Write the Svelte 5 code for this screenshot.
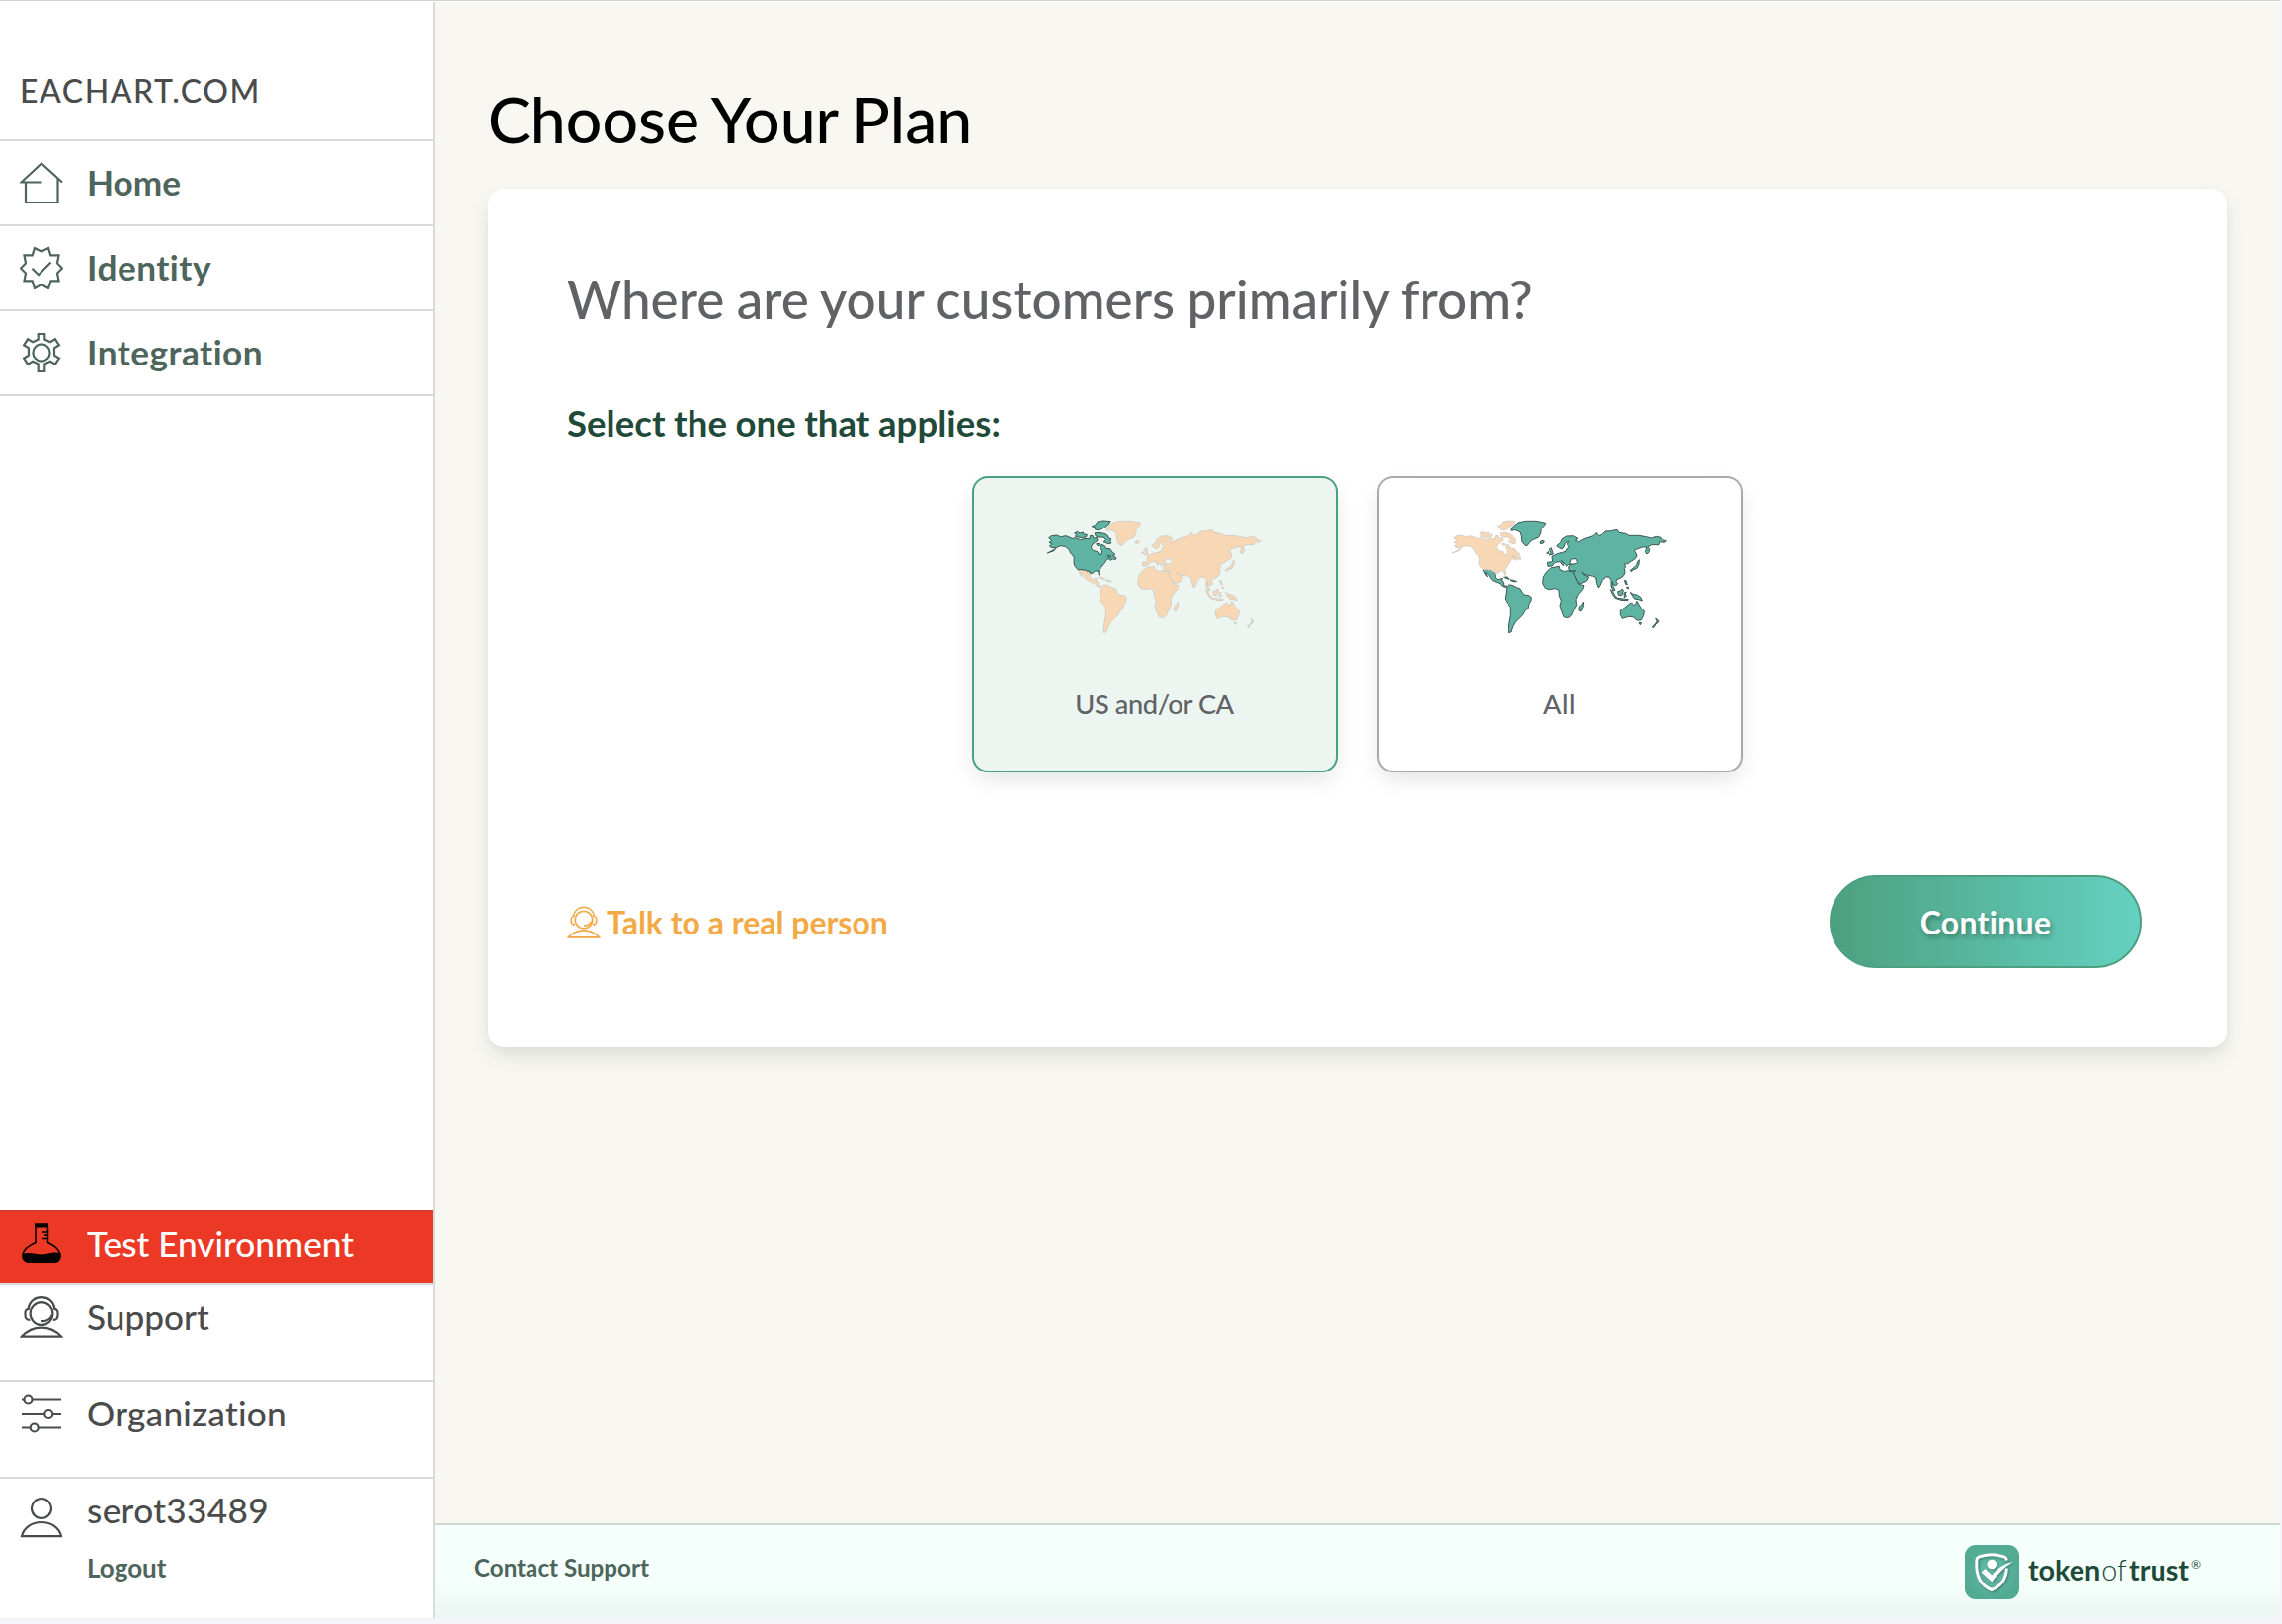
<script>
  const nav = [
    { label: 'Home', icon: 'home' },
    { label: 'Identity', icon: 'badge' },
    { label: 'Integration', icon: 'gear' }
  ];

  const regions = [
    { label: 'US and/or CA', us: true, selected: true },
    { label: 'All', us: false, selected: false }
  ];

  // Canada, the United States and the Arctic islands
  const northAmerica = [
    'M64 150L84 140L90 134L78 134L70 129L78 122L69 118L78 113L68 104L76 98L92 96L104 101L120 98L140 106L150 104L164 110L180 106L192 107L193 98L201 97L204 106L214 103L216 112L208 118L200 124L196 134L202 142L216 146L222 156L228 154L230 143L224 134L228 124L238 128L242 136L254 137L262 148L270 154L262 158L272 163L272 169L262 168L256 172L250 167L244 170L236 182L226 194L222 203L224 216L220 216L218 204L208 204L204 209L194 212L190 204L184 206L180 200L174 202L168 200L156 200L146 188L144 178L145 164L140 156L134 150L130 140L118 130L104 128L92 133L84 143Z',
    'M198 68L210 64L216 54L234 51L255 53L250 62L238 72L220 80L208 78L210 72Z',
    'M146 90L154 85L162 90L172 87L174 93L184 94L182 101L170 104L158 102L148 99L154 94Z',
    'M208 89L222 88L240 92L248 98L250 104L258 108L254 114L258 120L248 122L240 118L234 116L242 110L234 102L218 102L210 98Z',
    'M212 122L220 121L224 125L216 128Z',
    'M246 158L254 157L258 162L250 164Z'
  ];

  const restOfWorld = [
    // Greenland and Iceland
    'M242 81L250 68L264 57L286 52L318 52L347 58L344 65L334 76L332 90L326 102L308 110L298 118L292 127L285 127L276 116L274 98L270 86L256 80Z',
    'M330 117L336 112L343 114L340 120L332 122Z',
    // Mexico, Central America and the Caribbean
    'M156 200L168 200L174 202L180 200L186 206L192 212L193 222L198 230L208 228L214 226L212 234L218 238L218 248L228 250L224 254L214 250L208 242L196 238L184 232L178 224L172 214L164 208L170 222L164 216Z',
    'M218 223L228 222L238 228L232 229Z',
    'M240 231L250 232L260 236L248 236Z',
    // South America
    'M228 252L236 246L246 247L260 254L270 258L276 268L282 276L296 278L304 284L303 294L297 304L294 318L284 326L278 338L268 348L256 360L248 374L243 390L234 391L236 366L241 338L241 314L230 302L223 288L226 270Z',
    // Africa and Madagascar
    'M364 194L388 190L390 200L404 206L412 203L430 207L437 224L446 244L462 248L458 260L444 276L438 290L440 308L432 322L424 340L414 347L402 344L396 328L390 310L394 294L388 280L387 262L376 257L358 260L346 256L338 242L340 222L350 206Z',
    'M448 312L456 306L460 298L461 308L454 326L447 324Z',
    // Europe and Asia
    'M380 128L392 118L396 108L410 99L430 98L444 106L436 112L446 116L460 108L470 104L480 102L492 98L502 88L508 98L518 94L528 84L545 83L564 79L570 88L590 91L600 97L630 97L652 101L668 105L682 100L696 103L700 110L712 113L706 118L692 116L690 125L668 125L656 132L662 138L660 148L654 153L649 146L654 132L640 132L624 138L616 142L624 156L620 166L608 174L596 182L586 183L590 192L586 196L588 208L584 218L574 226L564 229L561 236L566 242L560 249L552 244L549 236L552 250L558 262L552 264L546 250L546 232L540 222L530 222L520 232L513 248L508 255L503 242L500 224L490 219L474 217L460 213L456 206L462 216L476 222L470 234L450 243L442 234L434 218L430 206L438 203L418 204L416 192L422 184L438 182L443 178L438 167L424 168L420 178L424 184L414 184L410 190L406 182L394 172L402 182L400 188L390 176L376 178L366 189L354 190L352 178L368 176L366 160L382 152L398 148L408 145L410 138L418 132L412 124L416 114L406 120L402 132L396 138L388 134Z',
    'M358 156L362 148L358 138L364 134L368 146L370 153Z',
    'M350 150L356 145L356 152Z',
    // Japan and the western Pacific
    'M604 202L614 194L622 188L626 176L631 170L630 184L624 196L612 201L606 206Z',
    'M586 232L592 234L592 242L596 244L590 244Z',
    'M592 254L598 252L598 258Z',
    'M544 260L552 268L558 280L566 286L582 288L598 290L596 293L576 292L558 286L550 274Z',
    'M566 266L574 264L580 258L583 264L578 278L568 277Z',
    'M585 270L592 268L588 273L592 280L586 284Z',
    'M604 268L612 274L626 277L636 284L640 294L628 290L616 288L610 278Z',
    // Australia and New Zealand
    'M574 324L586 316L598 306L608 300L614 308L620 304L624 295L630 306L636 316L646 326L644 340L636 354L624 354L612 344L598 343L580 349L574 338Z',
    'M630 361L638 362L634 368Z',
    'M680 348L690 356L686 363L680 366L684 356Z',
    'M670 375L680 364L678 372L673 377Z'
  ];
</script>

{#snippet agent()}
  <g transform="translate(0 1.6)">
    <circle cx="22" cy="18" r="11.4" />
    <path d="M8.600 13C9.600 6 15 1.600 22 1.600S34.400 6 35.400 13" />
    <path d="M9.800 13c-4 .6-4.600 2-4.300 6 .1 3.600 1.200 5.400 4.700 5.200M34.200 13c4 .6 4.600 2 4.300 6-.1 3.600-1.200 5.400-4.700 5.200" />
    <path d="M22 25.400c5 .4 9-2 11-6.400" />
    <path d="M2 41C7 35.500 14 32 22 32s15 3.500 20 9z" />
  </g>
{/snippet}

{#snippet icon(name)}
  <svg class="icon" viewBox="0 0 44 44">
    {#if name === 'home'}
      <path d="M22.500 21.500H1.500L22 2.500 43 21.500M6 21.500V42H38.500V17.500" />
    {:else if name === 'badge'}
      <path d="M22 5.600L29 2 31.300 9.300 39.500 9.300 38 17.500 43 22.500 38 27.500 39.500 35.400 31.500 35.400 29 43 22 39 15 43 12.600 35.400 4.500 35.400 6 27.500 1 22.500 6 17.500 4.500 9.300 12.700 9.300 15 2Z" />
      <path d="M12.500 22.800l6.500 6.500L31.500 16.500" />
    {:else if name === 'gear'}
      <path d="M18.700 3h6.600v5.500l5.600 2.800 5-3 4 6-4.900 3v7.400l4.900 3-4 6-5-3-5.600 2.800V41h-6.600v-7.500l-5.600-2.800-5 3-4-6 4.900-3v-7.400l-4.900-3 4-6 5 3 5.600-2.800z" />
      <circle cx="22" cy="22" r="8.600" />
    {:else if name === 'flask'}
      <path class="solid" d="M15 2.300h14v4.200h-14zM2.500 33c10-3 16 2 24 0s10-2 15-.5C42.500 39 40 43 35 43H10C4 43 1.500 39 2.500 33Z" />
      <path d="M16 6V21.500C10 24 4 28 2.800 34M28.500 6V21.500C34 24 40 28 41 34M23 11h5M25 14h3M23 17.500h5" stroke-width="1.500" />
    {:else if name === 'agent'}
      {@render agent()}
    {:else if name === 'sliders'}
      <path d="M2 8.500H4.500M13 8.500H42M2 23H25M34 23H42M2 37.500H10.500M19 37.500H42" />
      <circle cx="8.500" cy="8.500" r="4" /><circle cx="29.300" cy="23" r="4" /><circle cx="14.700" cy="37.500" r="4" />
    {:else if name === 'user'}
      <circle cx="22" cy="13" r="10" />
      <path d="M2 41.200C4 32.500 12 27 22 27S40 32.500 42 41.200Z" />
    {/if}
  </svg>
{/snippet}

<div class="page">
  <aside>
    <div class="site">EACHART.COM</div>
    <nav>
      {#each nav as item}
        <a class="nav-row" href="#top">{@render icon(item.icon)}<span class={item.icon}>{item.label}</span></a>
      {/each}
    </nav>
    <div class="lower">
      <div class="low-row test">{@render icon('flask')}<span>Test Environment</span></div>
      <div class="low-row">{@render icon('agent')}<span>Support</span></div>
      <div class="low-row">{@render icon('sliders')}<span class="org">Organization</span></div>
      <div class="low-row account">
        {@render icon('user')}
        <div class="who"><span class="name">serot33489</span><a class="logout" href="#top">Logout</a></div>
      </div>
    </div>
  </aside>

  <div class="content">
    <main>
      <h1>Choose Your Plan</h1>
      <section class="panel">
        <h2>Where are your customers primarily from?</h2>
        <h3>Select the one that applies:</h3>
        <div class="options">
          {#each regions as r}
            <div class="option" class:selected={r.selected}>
              <svg class="map" viewBox="0 0 780 450">
                <g class={r.us ? 'off' : 'on'}>{#each restOfWorld as d}<path {d} />{/each}</g>
                <g class={r.us ? 'on' : 'off'}>{#each northAmerica as d}<path {d} />{/each}</g>
              </svg>
              <span class:tight={r.us}>{r.label}</span>
            </div>
          {/each}
        </div>
        <div class="actions">
          <a class="talk" href="#top">
            <svg viewBox="0 0 44 44">{@render agent()}</svg>
            <span>Talk to a real person</span>
          </a>
          <button>Continue</button>
        </div>
      </section>
    </main>
    <footer>
      <a class="contact" href="#top">Contact Support</a>
      <div class="brand">
        <svg viewBox="0 0 55 55">
          <defs>
            <radialGradient id="tile"><stop offset="0" stop-color="#66bcad" /><stop offset="1" stop-color="#52aa92" /></radialGradient>
          </defs>
          <rect width="55" height="55" rx="11" fill="url(#tile)" />
          <g class="drop">
            <path class="shield" d="M42.300 15.500C42 12.500 41 12 38 11.500C31 9.300 23 9.300 16 11.500C12.500 12.500 12 13 11.800 17C11 31 15 40.500 27 45.500C38 41 42 33 42.300 23.500" />
            <circle cx="27.300" cy="19.500" r="4.800" />
            <path class="tick" d="M16.500 27.500L20.500 24 27.500 30.500C33 23.500 40 18.500 49 17 41 21.500 34 28.500 27.300 37.500Z" />
          </g>
        </svg>
        <div class="word"><b>token</b><i>of</i><b>trust</b><sup>®</sup></div>
      </div>
    </footer>
  </div>
</div>

<style>
  :global(body) { background: #f4f4fa; }
  .page {
    display: flex;
    width: 2308px;
    height: 1638px;
    box-sizing: border-box;
    border-top: 1px solid #d3d2d3;
    background: #fff;
    color: #4a4c4c;
    font-family: Lato, sans-serif;
    font-variant-ligatures: none;
    white-space: nowrap;
  }
  a { color: inherit; text-decoration: none; }
  svg { display: block; flex: none; }

  aside {
    display: flex;
    flex-direction: column;
    flex: none;
    width: 438px;
    margin-top: 1px;
    border-right: 2px solid #d9dada;
  }
  .site {
    height: 139px;
    padding: 70px 0 0 20px;
    box-sizing: border-box;
    font-size: 32px;
    font-weight: 500;
    line-height: 40px;
    letter-spacing: 1.550px;
  }
  nav { border-bottom: 2px solid #d9dada; }
  .nav-row {
    display: flex;
    align-items: center;
    gap: 24px;
    height: 84px;
    padding-left: 20px;
    border-top: 2px solid #d9dada;
    color: #4e655c;
    font-size: 35.200px;
    font-weight: 700;
  }
  .nav-row span { padding-bottom: 3px; }
  .badge, .gear { letter-spacing: 0.500px; }
  .icon {
    width: 44px;
    height: 44px;
    fill: none;
    stroke: currentColor;
    stroke-width: 2.200;
  }
  .lower { margin-top: auto; }
  .low-row {
    display: flex;
    align-items: flex-start;
    gap: 24px;
    height: 87px;
    padding: 9px 0 0 20px;
    border-top: 2px solid #d9dada;
    font-size: 35.200px;
    font-weight: 500;
    line-height: 45px;
  }
  .test { height: 63px; background: #ec3926; border-color: #d93c2a; color: #fff; }
  .test .icon { color: #000; }
  .solid { fill: #000; stroke: none; }
  .org { letter-spacing: 0.250px; }
  .account { height: 132px; }
  .account .icon { margin-top: 8px; }
  .who { display: flex; flex-direction: column; gap: 16px; }
  .name { letter-spacing: 0.350px; }
  .logout { color: #4e655c; font-size: 26px; font-weight: 700; line-height: 40px; }

  .content { display: flex; flex-direction: column; flex: 1; margin-top: 1px; background: #f8f7f2; }
  main { flex: 1; padding: 84px 54px 0 54px; }
  h1, h2, h3 { margin: 0; }
  h1 { color: #000; font-size: 64.300px; font-weight: 500; line-height: 70px; word-spacing: -2px; }
  .panel {
    height: 869px;
    margin-top: 35px;
    padding: 79px 86px 0 80px;
    box-sizing: border-box;
    border-radius: 16px;
    background: #fff;
    box-shadow: 0 10px 24px -4px rgba(60, 80, 60, 0.160), 0 4px 12px -4px rgba(60, 80, 60, 0.080);
  }
  h2 { color: #616266; font-size: 53.100px; font-weight: 500; line-height: 66px; word-spacing: -1px; }
  h3 { margin-top: 67px; color: #1f4a3a; font-size: 36.500px; font-weight: 700; line-height: 50px; word-spacing: -0.500px; letter-spacing: 0.080px; }
  .options { display: flex; justify-content: center; gap: 40px; margin: 29px 0 0 5px; }
  .option {
    display: flex;
    flex-direction: column;
    align-items: center;
    width: 370px;
    height: 300px;
    padding-top: 26px;
    box-sizing: border-box;
    border: 2px solid #a9a9a9;
    border-radius: 16px;
    background: #fff;
    box-shadow: 0 10px 24px -4px rgba(0, 0, 0, 0.120);
    color: #616266;
    font-size: 27.200px;
    font-weight: 500;
  }
  .option span { margin-top: 33px; line-height: 40px; letter-spacing: 0.500px; }
  .option .tight { letter-spacing: -0.400px; }
  .selected { border-color: #4ba080; background: #ecf5f0; }
  .map { width: 260px; height: 150px; margin-left: 1px; stroke-linejoin: round; }
  .on { fill: #5fb3a3; stroke: #3b5853; stroke-width: 3; }
  .off { fill: #f8d7b5; stroke: #cdcbc7; stroke-width: 2.500; }

  .actions { display: flex; justify-content: space-between; align-items: center; margin-top: 104px; }
  .talk { display: flex; align-items: center; gap: 6px; color: #f3a945; font-size: 32px; font-weight: 700; }
  .talk svg { width: 34px; height: 34px; fill: none; stroke: currentColor; stroke-width: 2.200; }
  button {
    width: 316px;
    height: 94px;
    padding: 0;
    border: 2px solid #4ca07f;
    border-radius: 47px;
    background: linear-gradient(90deg, #4ca07f, #65d1c1);
    color: #fff;
    font: 700 32px Lato, sans-serif;
    font-variant-ligatures: none;
    letter-spacing: 0.300px;
    text-shadow: 2px 3px 5px rgba(0, 0, 0, 0.300);
  }

  footer {
    display: flex;
    align-items: flex-start;
    justify-content: space-between;
    height: 94px;
    padding: 0 80px 0 40px;
    border-top: 2px solid #d0dad5;
    background: linear-gradient(#f5fffb 60%, #ebf5f1);
  }
  .contact { margin-top: 22px; color: #4e655c; font-size: 24.200px; font-weight: 700; line-height: 42px; }
  .brand { display: flex; gap: 9px; margin-top: 20px; }
  .brand svg { width: 55px; height: 55px; }
  .drop { fill: #fff; filter: drop-shadow(1px 1px 1px rgba(20, 70, 55, 0.500)); }
  .shield { fill: none; stroke: #fff; stroke-width: 3; }
  .word { display: flex; color: #1f4a3a; font-size: 28.800px; line-height: 50px; }
  .word i { margin: 0 2px 0 1px; font-style: normal; font-weight: 300; }
  .word sup { margin: -2px 0 0 2px; font-size: 12px; line-height: 44px; }
</style>
